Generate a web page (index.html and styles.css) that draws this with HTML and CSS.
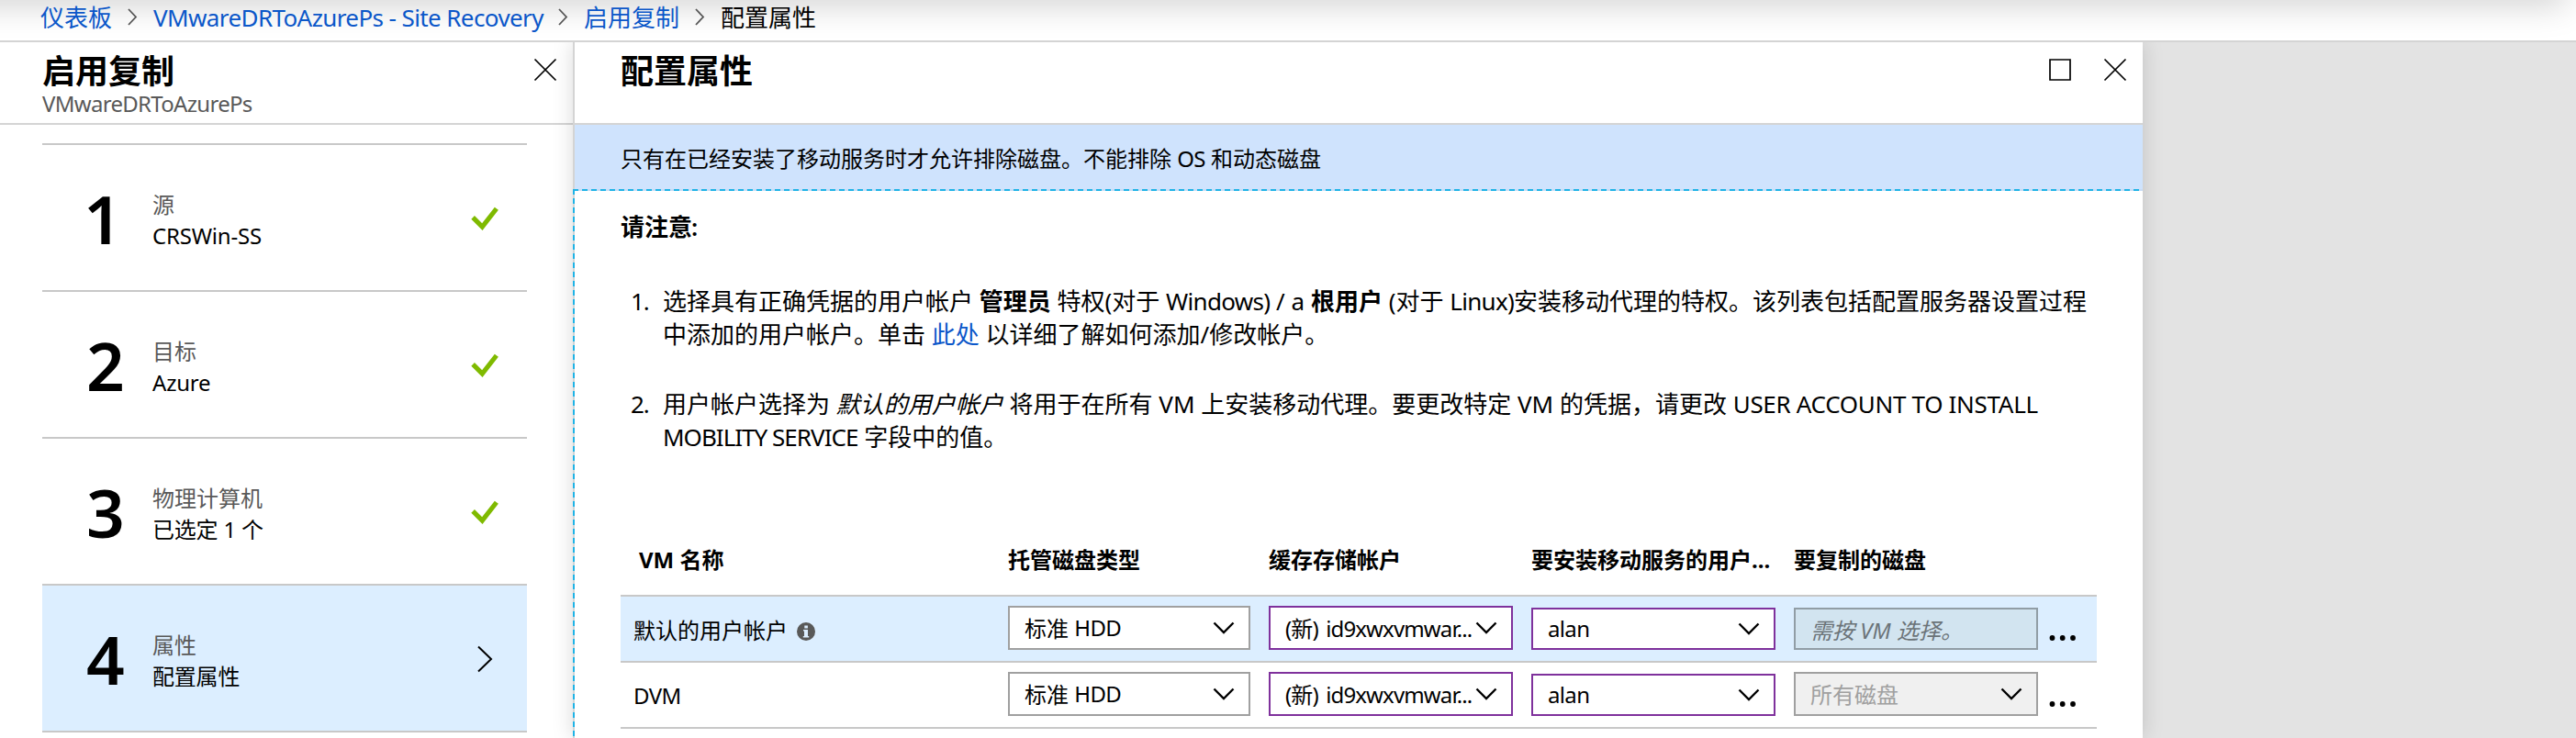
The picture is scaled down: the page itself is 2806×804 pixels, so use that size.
FILE: index.html
```html
<!DOCTYPE html>
<html lang="zh-CN">
<head>
<meta charset="utf-8">
<title>配置属性</title>
<link rel="stylesheet" href="styles.css">
</head>
<body>
<nav class="crumbs">
  <a class="crumb">仪表板</a>
  <svg class="sep" viewBox="0 0 12 24"><path d="M2 3L10 11.500L2 20"/></svg>
  <a class="crumb crumb-site">VMwareDRToAzurePs - Site Recovery</a>
  <svg class="sep" viewBox="0 0 12 24"><path d="M2 3L10 11.500L2 20"/></svg>
  <a class="crumb">启用复制</a>
  <svg class="sep" viewBox="0 0 12 24"><path d="M2 3L10 11.500L2 20"/></svg>
  <span class="crumb current">配置属性</span>
</nav>
<main class="journey">
  <section class="blade steps-blade">
    <header class="head">
      <div>
        <h1 class="title">启用复制</h1>
        <p class="subtitle">VMwareDRToAzurePs</p>
      </div>
      <svg class="win-icon" viewBox="0 0 26 26"><path d="M1.500 1.500L24.500 24.500M24.500 1.500L1.500 24.500"/></svg>
    </header>
    <ol class="steps">
      <li class="step">
        <span class="num one">1</span>
        <div class="step-text"><p class="label">源</p><p class="value">CRSWin-SS</p></div>
        <svg class="check" viewBox="0 0 28 24"><path d="M2 11L11.500 20.500L26 2"/></svg>
      </li>
      <li class="step">
        <span class="num">2</span>
        <div class="step-text"><p class="label">目标</p><p class="value">Azure</p></div>
        <svg class="check" viewBox="0 0 28 24"><path d="M2 11L11.500 20.500L26 2"/></svg>
      </li>
      <li class="step">
        <span class="num">3</span>
        <div class="step-text"><p class="label">物理计算机</p><p class="value">已选定 1 个</p></div>
        <svg class="check" viewBox="0 0 28 24"><path d="M2 11L11.500 20.500L26 2"/></svg>
      </li>
      <li class="step active">
        <span class="num">4</span>
        <div class="step-text"><p class="label">属性</p><p class="value">配置属性</p></div>
        <svg class="go" viewBox="0 0 18 30"><path d="M2 1.500L16 15L2 28.500"/></svg>
      </li>
    </ol>
  </section>
  <section class="blade props-blade">
    <header class="head">
      <h1 class="title">配置属性</h1>
      <div class="win-icons">
        <svg class="win-icon" viewBox="0 0 26 26"><path d="M2 2H24V24H2Z"/></svg>
        <svg class="win-icon" viewBox="0 0 26 26"><path d="M1.500 1.500L24.500 24.500M24.500 1.500L1.500 24.500"/></svg>
      </div>
    </header>
    <p class="banner">只有在已经安装了移动服务时才允许排除磁盘。不能排除 <span class="en">OS</span> 和动态磁盘</p>
    <div class="content">
      <h2 class="note-title">请注意<span class="colon">:</span></h2>
      <ol class="notes">
        <li class="note"><span class="marker">1.</span><p>选择具有正确凭据的用户帐户 <b>管理员</b> 特权(对于 <span class="en">Windows)</span> / a <b>根用户</b> (对于 <span class="en">Linux)</span>安装移动代理的特权。该列表包括配置服务器设置过程<br>中添加的用户帐户。单击 <a class="link">此处</a> 以详细了解如何添加/修改帐户。</p></li>
        <li class="note"><span class="marker">2.</span><p>用户帐户选择为 <i>默认的用户帐户</i> 将用于在所有 VM 上安装移动代理。要更改特定 VM 的凭据，请更改 <span class="caps">USER ACCOUNT TO INSTALL</span><br><span class="caps tight">MOBILITY SERVICE</span> 字段中的值。</p></li>
      </ol>
      <div class="grid">
        <div class="row row-head">
          <span class="first">VM 名称</span><span>托管磁盘类型</span><span>缓存存储帐户</span><span class="clip">要安装移动服务的用户...</span><span>要复制的磁盘</span>
        </div>
        <div class="row selected">
          <div class="name">默认的用户帐户
            <svg class="info" viewBox="0 0 20 20"><circle cx="10" cy="10" r="10"/><path d="M8.300 3.500h3.600v3h-3.600zM7 8h5v7h1.200v1.600H6.800V15H8V9.600H7z"/></svg>
          </div>
          <div class="select">标准 <span class="en">HDD</span><svg class="chev" viewBox="0 0 24 14"><path d="M1.500 1.500L12 12L22.500 1.500"/></svg></div>
          <div class="select changed"><span class="account">(新) id9xwxvmwar...</span><svg class="chev" viewBox="0 0 24 14"><path d="M1.500 1.500L12 12L22.500 1.500"/></svg></div>
          <div class="select changed short"><span class="en">alan</span><svg class="chev" viewBox="0 0 24 14"><path d="M1.500 1.500L12 12L22.500 1.500"/></svg></div>
          <div class="select hint short">需按 VM 选择。</div>
          <svg class="more" viewBox="0 0 30 8"><circle cx="3.500" cy="4" r="2.900"/><circle cx="14.700" cy="4" r="2.900"/><circle cx="26" cy="4" r="2.900"/></svg>
        </div>
        <div class="row">
          <div class="name"><span class="en">DVM</span></div>
          <div class="select">标准 <span class="en">HDD</span><svg class="chev" viewBox="0 0 24 14"><path d="M1.500 1.500L12 12L22.500 1.500"/></svg></div>
          <div class="select changed"><span class="account">(新) id9xwxvmwar...</span><svg class="chev" viewBox="0 0 24 14"><path d="M1.500 1.500L12 12L22.500 1.500"/></svg></div>
          <div class="select changed short"><span class="en">alan</span><svg class="chev" viewBox="0 0 24 14"><path d="M1.500 1.500L12 12L22.500 1.500"/></svg></div>
          <div class="select disabled">所有磁盘<svg class="chev" viewBox="0 0 24 14"><path d="M1.500 1.500L12 12L22.500 1.500"/></svg></div>
          <svg class="more" viewBox="0 0 30 8"><circle cx="3.500" cy="4" r="2.900"/><circle cx="14.700" cy="4" r="2.900"/><circle cx="26" cy="4" r="2.900"/></svg>
        </div>
      </div>
    </div>
  </section>
</main>
</body>
</html>
```
FILE: styles.css
```css
* { box-sizing: border-box; }

body {
  margin: 0;
  height: 804px;
  overflow: hidden;
  display: flex;
  flex-direction: column;
  background: #e3e3e3;
  color: #000;
  font-family: "Noto Sans", "Noto Sans CJK SC", sans-serif;
  font-size: 24px;
}

h1, h2, p, ol { margin: 0; padding: 0; }
ol { list-style: none; }
svg { fill: none; stroke: #000; stroke-width: 2; flex: none; display: block; }

.en { letter-spacing: -0.027em; }
.caps { letter-spacing: -0.012em; }
.caps.tight { letter-spacing: -0.038em; }
.account { letter-spacing: -0.036em; word-spacing: 3px; }

/* Breadcrumb bar */
.crumbs {
  position: relative;
  z-index: 2;
  flex: none;
  height: 46px;
  padding: 0 0 7px 44px;
  overflow: hidden;
  display: flex;
  align-items: center;
  background: #fff;
  border-bottom: 2px solid #d4d4d4;
  font-size: 26px;
  line-height: 36px;
  white-space: nowrap;
}
.crumbs::before {
  content: "";
  position: absolute;
  left: -80px;
  right: 10px;
  top: -40px;
  height: 40px;
  box-shadow: 0 6px 36px rgba(0, 0, 0, .18);
}
.crumb { position: relative; color: #0b57c9; }
.crumb.current { color: #000; }
.crumb-site { width: 424px; letter-spacing: -0.6px; }
.sep { position: relative; width: 12px; height: 24px; margin: 0 17px 0 16px; stroke: #555; stroke-width: 1.8; }

/* Blades */
.journey { display: flex; flex: 1; min-height: 0; overflow: hidden; }
.blade { background: #fff; }
.steps-blade { width: 624px; flex: none; }
.props-blade { position: relative; width: 1710px; flex: none; box-shadow: 0 0 22px rgba(0, 0, 0, .15); }

.head {
  height: 90px;
  display: flex;
  justify-content: space-between;
  padding: 10px 17px 0 46px;
  border-bottom: 2px solid #d4d4d4;
}
.props-blade .head { padding-left: 50px; border-left: 2px solid #d4d4d4; }
.title { padding-top: 1px; font-size: 36px; line-height: 42px; font-weight: 700; }
.subtitle { margin-top: -1px; font-size: 24px; line-height: 30px; color: #595959; letter-spacing: -0.7px; }
.win-icons { display: flex; gap: 34px; }
.win-icon { width: 26px; height: 26px; margin-top: 7px; stroke-width: 1.7; }

/* Wizard steps */
.steps { margin: 20px 50px 0 46px; border-top: 2px solid #c8c8c8; }
.step {
  height: 160px;
  display: flex;
  align-items: center;
  padding: 0 31px 0 48px;
  border-bottom: 2px solid #c8c8c8;
}
.step.active { background: #dceeff; }
.num { width: 72px; padding-top: 2px; font-size: 73px; line-height: 80px; font-weight: 600; }
.num.one { text-indent: -3px; }
.step-text { flex: 1; line-height: 34px; padding-top: 6px; }
.label { color: #595959; }
.value { letter-spacing: -0.2px; }
.check { width: 30px; height: 26px; margin-top: 2px; stroke: #7fba00; stroke-width: 4.8; }
.go { width: 18px; height: 30px; margin: 2px 6px 0 0; }

/* Properties */
.banner {
  height: 70px;
  padding: 2px 0 0 50px;
  border-left: 2px solid #d4d4d4;
  background: #cfe3fd;
  line-height: 70px;
}
.content {
  height: 600px;
  padding: 21px 50px 0 52px;
  background:
    repeating-linear-gradient(90deg, #1fb3e6 0 6px, #c9dcf5 6px 10px) 0 0 / 100% 2px no-repeat,
    repeating-linear-gradient(180deg, #1fb3e6 0 6px, #d0d4d6 6px 10px) 0 0 / 2px 100% no-repeat;
}
.note-title { font-size: 26px; line-height: 40px; font-weight: 700; }
.colon { margin-left: -1px; font-weight: 600; }
.notes { padding: 43px 0 0 11px; font-size: 26px; line-height: 36px; }
.note { display: flex; height: 112px; white-space: nowrap; }
.marker { width: 35px; letter-spacing: -1px; }
.link { color: #0b57c9; }

/* Machine table */
.grid { padding-top: 40px; }
.row {
  display: grid;
  grid-template-columns: 422px 284px 286px 286px 278px 52px;
  height: 72px;
  padding-top: 10px;
  border-bottom: 2px solid #c8c8c8;
  white-space: nowrap;
}
.row-head { height: 76px; padding: 19px 0 0; line-height: 34px; font-weight: 700; }
.row-head .first { padding-left: 20px; }
.selected { background: #dceeff; }
.name { display: flex; align-items: center; gap: 10px; height: 50px; padding: 0 0 0 14px; }
.info { width: 20px; height: 20px; margin-top: 5px; stroke: none; fill: #595959; }
.info path { fill: #dceeff; }
.select {
  width: 266px;
  height: 48px;
  padding: 0 15px 2px 16px;
  display: flex;
  align-items: center;
  white-space: pre;
  background: #fff;
  border: 2px solid #a0a0a0;
}
.row .select:nth-child(2) { width: 264px; }
.short { height: 46px; margin-top: 2px; }
.changed { border-color: #7f319c; }
.hint { padding: 0 0 0 16px; background: #d2e4f0; border-color: #919da5; color: #6b7378; font-style: italic; }
.disabled { background: #f0f0f0; color: #a0a0a0; }
.chev { width: 24px; height: 14px; margin: 2px 0 0 auto; stroke-width: 2.4; }
.more { width: 30px; height: 8px; margin-top: 31px; stroke: none; fill: #000; }
```
